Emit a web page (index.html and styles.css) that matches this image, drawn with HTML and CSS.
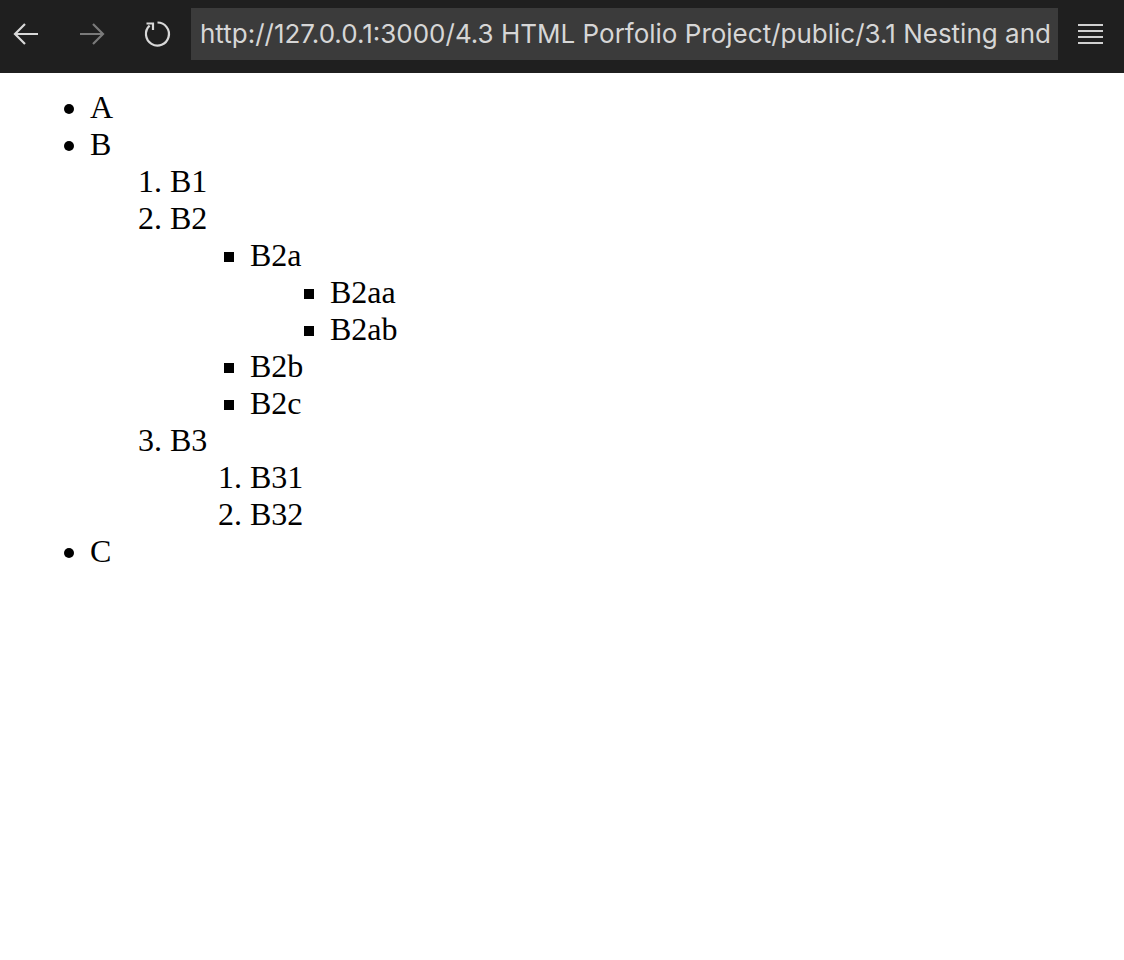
FILE: index.html
```html
<!DOCTYPE html>
<html>
<head>
<meta charset="utf-8">
<link rel="stylesheet" href="styles.css">
</head>
<body>
<header class="toolbar">
  <button class="nav-btn nav-back" aria-label="Back">
    <svg width="28" height="28" viewBox="0 0 28 28"><path d="M26 14H3M13 4L3 14l10 10" fill="none" stroke="#d8d8d8" stroke-width="2.2"/></svg>
  </button>
  <button class="nav-btn nav-fwd" aria-label="Forward">
    <svg width="28" height="28" viewBox="0 0 28 28"><path d="M2 14h23M15 4l10 10-10 10" fill="none" stroke="#7a7a7a" stroke-width="2.2"/></svg>
  </button>
  <button class="nav-btn nav-reload" aria-label="Reload">
    <svg width="30" height="30" viewBox="0 0 30 30"><path d="M15.5 3.5A11.5 11.5 0 1 1 7.6 6.6" fill="none" stroke="#d8d8d8" stroke-width="2.2"/><path d="M4.5 4.5h6.5v6.5" fill="none" stroke="#d8d8d8" stroke-width="2.2"/></svg>
  </button>
  <div class="url-bar">http://127.0.0.1:3000/4.3 HTML Porfolio Project/public/3.1 Nesting and Indentation/index.html</div>
  <button class="menu-btn" aria-label="Menu">
    <span></span><span></span><span></span><span></span>
  </button>
</header>
<main class="content">
  <ul class="list-disc">
    <li>A</li>
    <li>B
      <ol class="list-num">
        <li>B1</li>
        <li>B2
          <ul class="list-square">
            <li>B2a
              <ul class="list-square">
                <li>B2aa</li>
                <li>B2ab</li>
              </ul>
            </li>
            <li>B2b</li>
            <li>B2c</li>
          </ul>
        </li>
        <li>B3
          <ol class="list-num">
            <li>B31</li>
            <li>B32</li>
          </ol>
        </li>
      </ol>
    </li>
    <li>C</li>
  </ul>
</main>
</body>
</html>
```

FILE: styles.css
```css
html, body {
  margin: 0;
  padding: 0;
  background: #ffffff;
}

.toolbar {
  height: 73px;
  background: #1f1f1f;
  display: flex;
  align-items: center;
  padding: 0 10px 5px 12px;
  box-sizing: border-box;
  overflow: hidden;
}

.nav-btn {
  background: none;
  border: 0;
  padding: 0;
  height: 52px;
  display: flex;
  align-items: center;
  justify-content: flex-start;
  flex: none;
}

.nav-back {
  width: 66px;
}

.nav-fwd {
  width: 64px;
}

.nav-reload {
  width: 49px;
}

.url-bar {
  flex: 0 0 867px;
  height: 52px;
  background: #3b3b3b;
  color: #d6d6d6;
  font-family: Inter, "Liberation Sans", sans-serif;
  font-size: 26px;
  line-height: 52px;
  padding-left: 9px;
  box-sizing: border-box;
  white-space: nowrap;
  overflow: hidden;
}

.menu-btn {
  background: none;
  border: 0;
  padding: 0;
  margin-left: 20px;
  width: 25px;
  height: 20px;
  display: flex;
  flex-direction: column;
  justify-content: space-between;
  flex: none;
}

.menu-btn span {
  display: block;
  height: 2px;
  width: 25px;
  background: #d0d0d0;
}

.content {
  font-family: "Liberation Serif", "Times New Roman", serif;
  font-size: 32px;
  line-height: 37px;
  color: #000;
}

.list-disc {
  list-style-type: disc;
  margin: 16px 0 0 0;
  padding-left: 90px;
}

.list-num {
  list-style-type: decimal;
  margin: 0;
  padding-left: 80px;
}

.list-square {
  list-style-type: square;
  margin: 0;
  padding-left: 80px;
}
```
